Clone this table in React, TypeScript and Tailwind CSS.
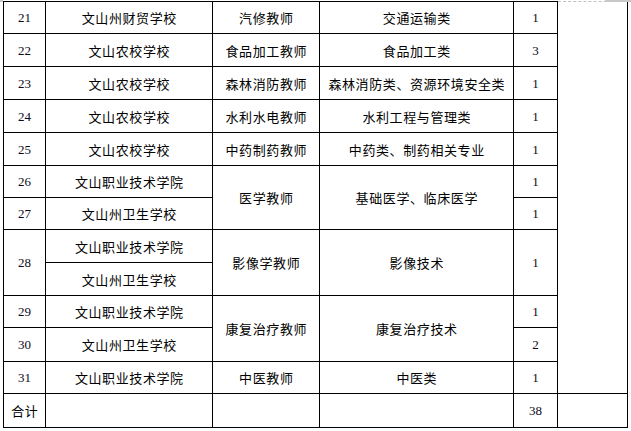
import React from "react";

const cjk = { fontFamily: '"Noto Sans CJK SC", "Noto Sans", sans-serif' };
const serif = { fontFamily: '"Liberation Serif", "Times New Roman", serif' };

type CellProps = {
  children?: React.ReactNode;
  className?: string;
  num?: boolean;
};

function Cell({ children, className = "", num }: CellProps) {
  return (
    <div
      className={`bg-white flex items-center justify-center text-[13px] leading-none text-black whitespace-nowrap ${
        num ? "" : "tracking-[0.6px] pl-[0.6px]"
      } ${className}`}
      style={num ? { ...serif, color: "#0b0b1a" } : cjk}
    >
      {children}
    </div>
  );
}

export default function App() {
  return (
    <div className="relative w-[631px] h-[431px] bg-white overflow-hidden">
      <div className="absolute left-0 top-0 w-[3px] h-[2px] bg-[#c8c8c8]" />
      <div className="absolute right-0 top-0 w-[26px] h-[2px] bg-[#c8c8c8]" />
      <div className="pt-px pl-[3px]">
        <div className="grid w-[625px] grid-cols-[41px_166px_106px_193px_43px_69px] grid-rows-[31px_32px_32px_32px_32px_31px_31px_32px_32px_31px_33px_31px_33px] gap-px bg-black p-px">
          {/* 21 */}
          <Cell num>21</Cell>
          <Cell>文山州财贸学校</Cell>
          <Cell>汽修教师</Cell>
          <Cell>交通运输类</Cell>
          <Cell num>1</Cell>
          <div className="row-span-12 -mt-px bg-white border-t border-dashed border-[#c0c0c0]" />
          {/* 22 */}
          <Cell num>22</Cell>
          <Cell>文山农校学校</Cell>
          <Cell>食品加工教师</Cell>
          <Cell>食品加工类</Cell>
          <Cell num>3</Cell>
          {/* 23 */}
          <Cell num>23</Cell>
          <Cell>文山农校学校</Cell>
          <Cell>森林消防教师</Cell>
          <Cell>森林消防类、资源环境安全类</Cell>
          <Cell num>1</Cell>
          {/* 24 */}
          <Cell num>24</Cell>
          <Cell>文山农校学校</Cell>
          <Cell>水利水电教师</Cell>
          <Cell>水利工程与管理类</Cell>
          <Cell num>1</Cell>
          {/* 25 */}
          <Cell num>25</Cell>
          <Cell>文山农校学校</Cell>
          <Cell>中药制药教师</Cell>
          <Cell>中药类、制药相关专业</Cell>
          <Cell num>1</Cell>
          {/* 26 / 27 */}
          <Cell num>26</Cell>
          <Cell>文山职业技术学院</Cell>
          <Cell className="row-span-2">医学教师</Cell>
          <Cell className="row-span-2">基础医学、临床医学</Cell>
          <Cell num>1</Cell>
          <Cell num>27</Cell>
          <Cell>文山州卫生学校</Cell>
          <Cell num>1</Cell>
          {/* 28 */}
          <Cell num className="row-span-2">28</Cell>
          <Cell>文山职业技术学院</Cell>
          <Cell className="row-span-2">影像学教师</Cell>
          <Cell className="row-span-2">影像技术</Cell>
          <Cell num className="row-span-2">1</Cell>
          <Cell>文山州卫生学校</Cell>
          {/* 29 / 30 */}
          <Cell num>29</Cell>
          <Cell>文山职业技术学院</Cell>
          <Cell className="row-span-2">康复治疗教师</Cell>
          <Cell className="row-span-2">康复治疗技术</Cell>
          <Cell num>1</Cell>
          <Cell num>30</Cell>
          <Cell>文山州卫生学校</Cell>
          <Cell num>2</Cell>
          {/* 31 */}
          <Cell num>31</Cell>
          <Cell>文山职业技术学院</Cell>
          <Cell>中医教师</Cell>
          <Cell>中医类</Cell>
          <Cell num>1</Cell>
          {/* 合计 */}
          <Cell>合计</Cell>
          <Cell />
          <Cell />
          <Cell />
          <Cell num>38</Cell>
          <Cell />
        </div>
      </div>
    </div>
  );
}
